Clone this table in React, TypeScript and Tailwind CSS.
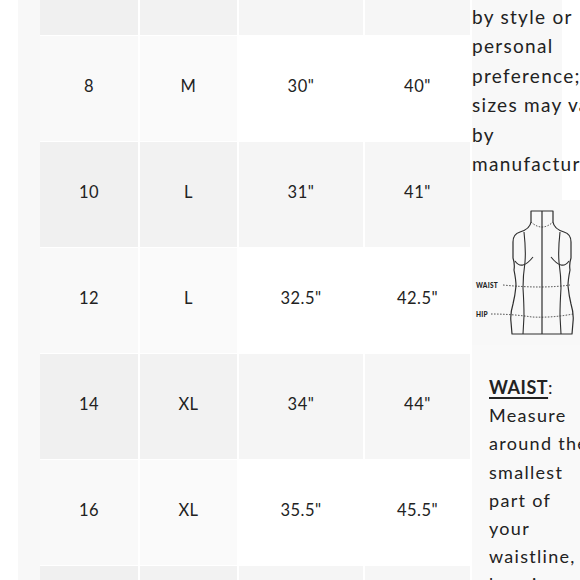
import React from "react";

const rows: { cells: string[]; h: number }[] = [
  { cells: ["", "", "", ""], h: 35 },
  { cells: ["8", "M", "30\"", "40\""], h: 105 },
  { cells: ["10", "L", "31\"", "41\""], h: 105 },
  { cells: ["12", "L", "32.5\"", "42.5\""], h: 105 },
  { cells: ["14", "XL", "34\"", "44\""], h: 105 },
  { cells: ["16", "XL", "35.5\"", "45.5\""], h: 105 },
  { cells: ["", "", "", ""], h: 40 },
];

const darkCols = ["bg-[#f0f0f0]", "bg-[#f2f2f2]", "bg-[#f5f5f5]", "bg-[#f6f6f6]"];
const lightCols = ["bg-[#f9f9f9]", "bg-[#fafafa]", "bg-white", "bg-white"];

function DressForm() {
  const s = "#2e2e2e";
  return (
    <svg width="108" height="145" viewBox="0 0 108 145" fill="none">
      <path
        d="M59 11 L59 22 Q58 29 48 32 Q41 34 41 42 L41 58 Q43 64 42 70 Q44 80 44 86 Q43 96 41 104 Q38 114 39 122 L40 134 L100 134 L101 122 Q102 114 99 104 Q97 96 96 86 Q96 80 98 70 Q97 64 99 58 L99 42 Q99 34 92 32 Q82 29 81 22 L81 11 Z"
        stroke={s}
        strokeWidth="1.2"
        strokeLinejoin="round"
      />
      <path d="M70 11 L70 134" stroke={s} strokeWidth="1.2" />
      <path d="M52 32 Q54 50 53 62 Q51 76 51 88 Q52 104 52 116 L51 134" stroke={s} strokeWidth="1.1" />
      <path d="M88 32 Q86 50 87 62 Q89 76 89 88 Q88 104 88 116 L89 134" stroke={s} strokeWidth="1.1" />
      <path d="M43 61 Q50 71 61 57" stroke={s} strokeWidth="1.1" />
      <path d="M79 57 Q90 71 97 61" stroke={s} strokeWidth="1.1" />
      <path d="M59 22 Q70 32 81 22" stroke={s} strokeWidth="0.9" strokeDasharray="1.5 1.5" />
      <path d="M31 85 Q70 89 98 85" stroke={s} strokeWidth="0.9" strokeDasharray="1.5 1.5" />
      <path d="M19 114 Q40 114 60 117 Q80 118 101 114" stroke={s} strokeWidth="0.9" strokeDasharray="1.5 1.5" />
      <text x="4" y="87.5" fontSize="6.5" fontWeight="900" fill="#222" fontFamily="Lato, sans-serif" letterSpacing="0.3">
        WAIST
      </text>
      <text x="4" y="116.5" fontSize="6.5" fontWeight="900" fill="#222" fontFamily="Lato, sans-serif" letterSpacing="0.3">
        HIP
      </text>
    </svg>
  );
}

export default function App() {
  return (
    <div
      className="w-[580px] h-[580px] overflow-hidden bg-white flex text-[#222]"
      style={{ fontFamily: "Lato, 'Open Sans', sans-serif" }}
    >
      <div className="w-[18px] shrink-0 bg-white" />
      <div className="w-[22px] shrink-0 bg-[#f8f8f8]" />
      <div className="flex flex-col gap-y-[1px] bg-white shrink-0">
        {rows.map((r, i) => {
          const cols = i % 2 === 0 ? darkCols : lightCols;
          return (
            <div key={i} className="grid grid-cols-[98px_97px_124px_105px] gap-x-[2px] shrink-0" style={{ height: r.h }}>
              {r.cells.map((c, j) => (
                <div key={j} className={`${cols[j]} flex items-center justify-center pb-[4px] text-[16.5px] tracking-[0.5px]`}>
                  {c}
                </div>
              ))}
            </div>
          );
        })}
      </div>
      <div className="w-[2px] shrink-0 bg-white" />
      <div className="w-[108px] shrink-0 flex flex-col">
        <div className="w-[90px] h-[200px] shrink-0 bg-[#f8f8f8] pt-[2px]">
          <div className="w-[150px] text-[19px] leading-[29.4px] tracking-[1.3px]">
            by style or personal preference; sizes may vary by manufacturer.
          </div>
        </div>
        <div className="h-[145px] shrink-0 bg-[#f8f8f8]">
          <DressForm />
        </div>
        <div className="flex-1 bg-[#f9f9f9] pt-[28px] pl-[17px]">
          <div className="w-[101px] text-[18px] leading-[28.2px] tracking-[1.3px]">
            <span className="font-bold underline underline-offset-[3px] decoration-[1.5px] tracking-[0.5px]">WAIST</span>:{" "}
            Measure around the smallest part of your waistline, keeping the tape comfortably loose.
          </div>
        </div>
      </div>
    </div>
  );
}
